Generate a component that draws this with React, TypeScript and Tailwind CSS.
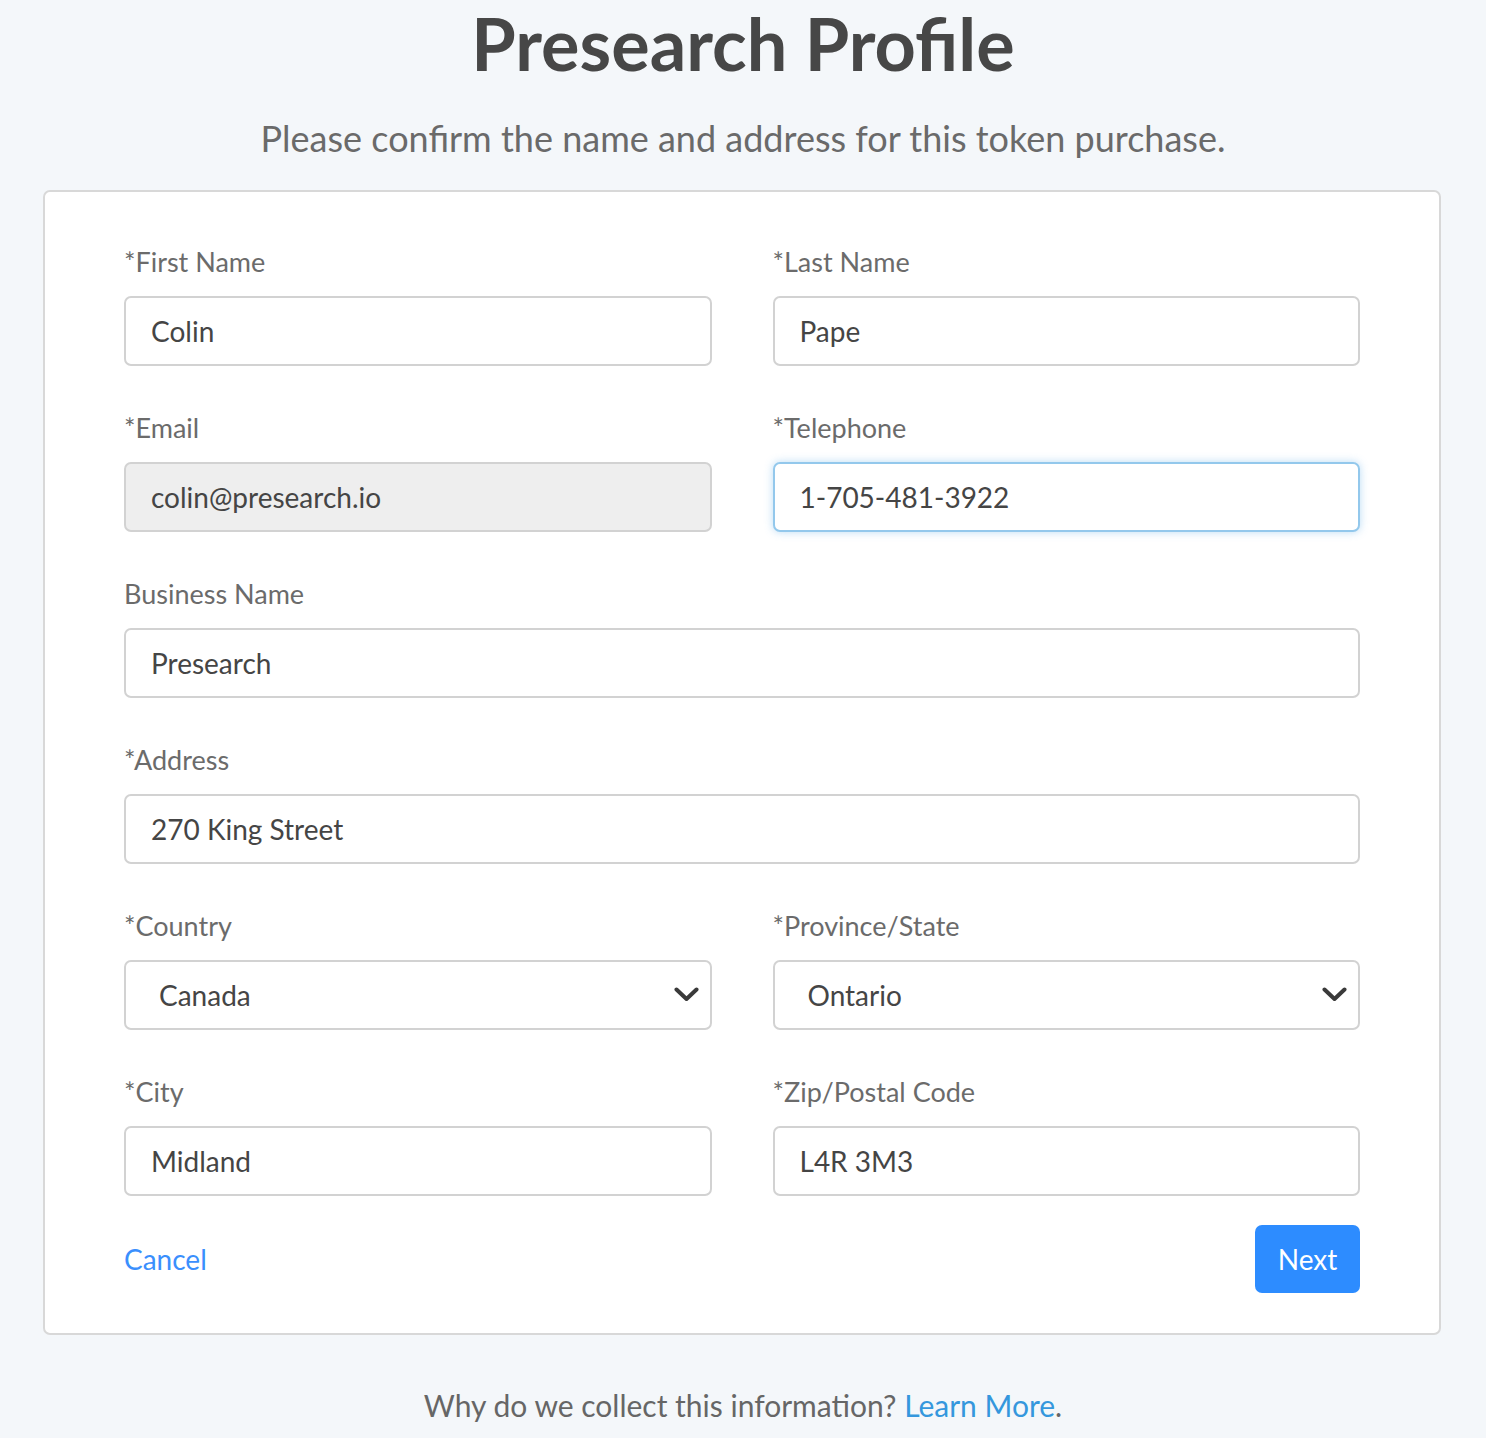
const font = { fontFamily: "Lato, 'Open Sans', sans-serif" };

type FieldProps = {
  label: string;
  value: string;
  disabled?: boolean;
  focused?: boolean;
};

function Field({ label, value, disabled, focused }: FieldProps) {
  return (
    <div className="flex flex-col">
      <label className="mb-[16px] h-[36px] text-[27px] leading-[36px] text-[#6b6b6b]">
        {label}
      </label>
      <div
        className={
          "flex h-[70px] items-center rounded-[7px] border-2 px-[25px] text-[28px] text-[#454545] " +
          (disabled
            ? "border-[#d2d2d2] bg-[#eeeeee]"
            : focused
              ? "border-[#93c8ec] bg-white shadow-[0_0_8px_rgba(102,175,233,0.45)]"
              : "border-[#d2d2d2] bg-white")
        }
      >
        {value}
      </div>
    </div>
  );
}

function SelectField({ label, value }: { label: string; value: string }) {
  return (
    <div className="flex flex-col">
      <label className="mb-[16px] h-[36px] text-[27px] leading-[36px] text-[#6b6b6b]">
        {label}
      </label>
      <div className="flex h-[70px] items-center justify-between rounded-[7px] border-2 border-[#d2d2d2] bg-white pr-[11px] pl-[33px] text-[28px] text-[#454545]">
        <span>{value}</span>
        <svg width="25" height="15" viewBox="0 0 25 15" className="mt-[-2px]">
          <polyline
            points="2.5,2.5 12.5,12 22.5,2.5"
            fill="none"
            stroke="#3a3a3a"
            strokeWidth="4"
            strokeLinecap="round"
            strokeLinejoin="round"
          />
        </svg>
      </div>
    </div>
  );
}

export default function App() {
  return (
    <div
      className="flex min-h-[1438px] flex-col items-center bg-[#f4f7fa]"
      style={font}
    >
      <h1 className="mt-[1px] text-[72px] leading-[84px] font-bold text-[#474747]">
        Presearch Profile
      </h1>
      <p className="mt-[31px] text-[36px] leading-[44px] text-[#6a6a6a]">
        Please confirm the name and address for this token purchase.
      </p>

      <div className="mt-[30px] mr-[45px] ml-[43px] self-stretch rounded-[7px] border-2 border-[#d8d8d8] bg-white px-[79px] pt-[52px] pb-[40px]">
        <div className="grid grid-cols-2 gap-x-[61px] gap-y-[44px]">
          <Field label="*First Name" value="Colin" />
          <Field label="*Last Name" value="Pape" />
          <Field label="*Email" value="colin@presearch.io" disabled />
          <Field label="*Telephone" value="1-705-481-3922" focused />
          <div className="col-span-2">
            <Field label="Business Name" value="Presearch" />
          </div>
          <div className="col-span-2">
            <Field label="*Address" value="270 King Street" />
          </div>
          <SelectField label="*Country" value="Canada" />
          <SelectField label="*Province/State" value="Ontario" />
          <Field label="*City" value="Midland" />
          <Field label="*Zip/Postal Code" value="L4R 3M3" />
        </div>

        <div className="mt-[29px] flex items-center justify-between">
          <a className="text-[28px] text-[#3a8ffd]">Cancel</a>
          <button className="h-[68px] w-[105px] rounded-[7px] bg-[#2d8cff] text-[28px] text-white">
            Next
          </button>
        </div>
      </div>

      <p className="mt-[50px] text-[30px] leading-[40px] text-[#666]">
        Why do we collect this information?{" "}
        <a className="text-[#3597dd]">Learn More</a>.
      </p>
    </div>
  );
}
